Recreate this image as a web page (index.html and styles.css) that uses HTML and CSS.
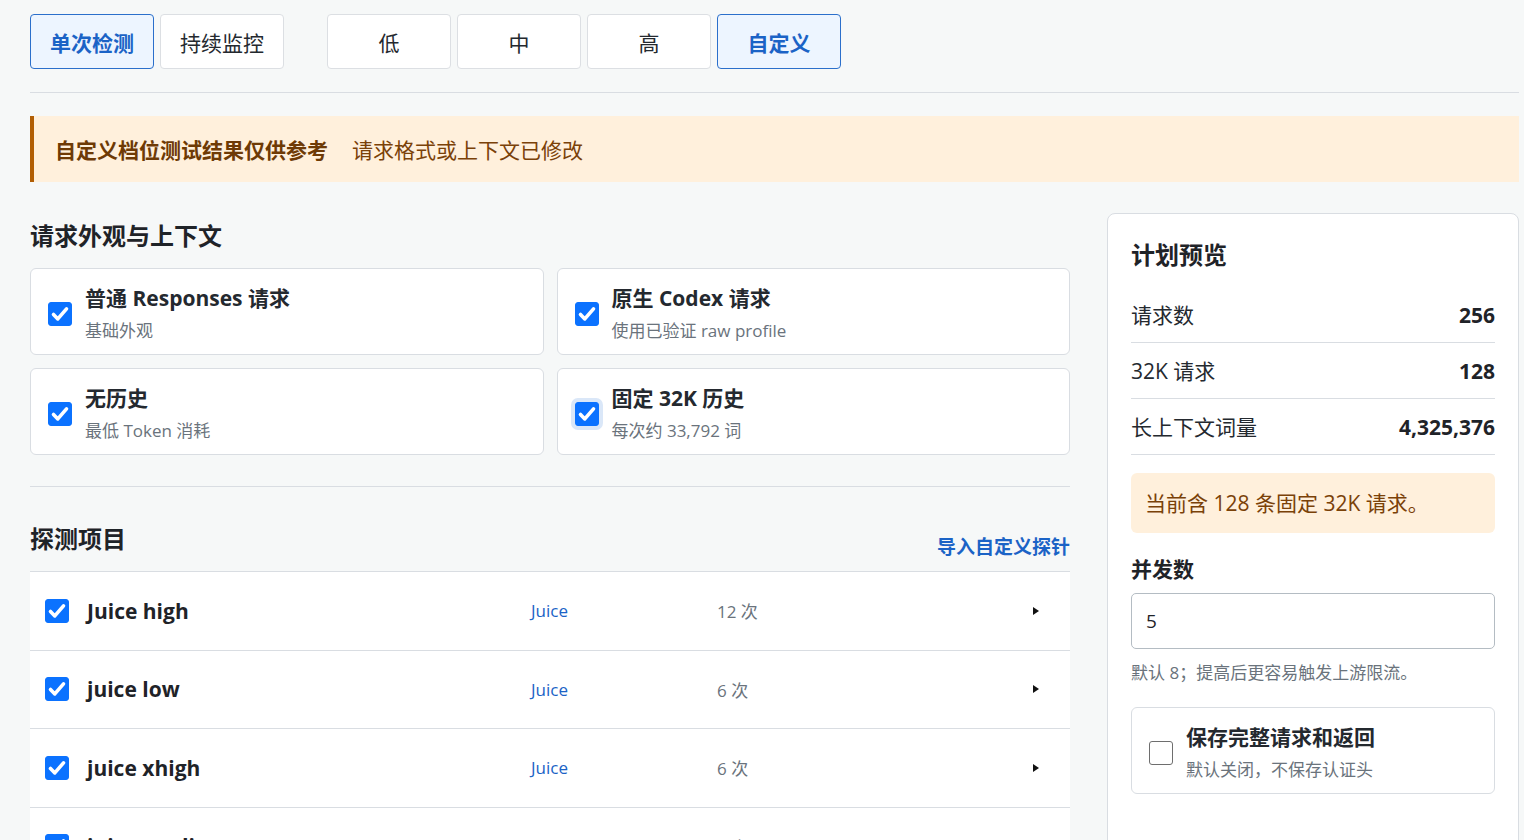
FILE: index.html
```html
<!DOCTYPE html>
<html lang="zh-CN">
<head>
    <meta charset="UTF-8">
    <meta name="viewport" content="width=device-width, initial-scale=1.0">
    <title>探测计划</title>
    <link rel="stylesheet" href="styles.css">
</head>
<body>
    <div class="page">
        <!-- 运行方式与档位 -->
        <div class="mode-bar">
            <div class="field">
                <div class="field-label">运行方式</div>
                <div class="seg">
                    <button class="seg-btn active">单次检测</button>
                    <button class="seg-btn">持续监控</button>
                </div>
            </div>
            <div class="field">
                <div class="field-label">档位</div>
                <div class="seg">
                    <button class="seg-btn">低</button>
                    <button class="seg-btn">中</button>
                    <button class="seg-btn">高</button>
                    <button class="seg-btn active">自定义</button>
                </div>
            </div>
        </div>

        <hr class="divider top-divider">

        <div class="banner">
            <strong>自定义档位测试结果仅供参考</strong>
            <span>请求格式或上下文已修改</span>
        </div>

        <div class="main">
            <div class="left">
                <h2 class="section-title first">请求外观与上下文</h2>
                <div class="option-grid">
                    <label class="option">
                        <span class="check on"><svg viewBox="0 0 24 24"><path d="M5.5 12.5l4.3 4.4 8.7-10"/></svg></span>
                        <span class="option-text">
                            <span class="option-title">普通 Responses 请求</span>
                            <span class="option-sub">基础外观</span>
                        </span>
                    </label>
                    <label class="option">
                        <span class="check on"><svg viewBox="0 0 24 24"><path d="M5.5 12.5l4.3 4.4 8.7-10"/></svg></span>
                        <span class="option-text">
                            <span class="option-title">原生 Codex 请求</span>
                            <span class="option-sub">使用已验证 raw profile</span>
                        </span>
                    </label>
                    <label class="option">
                        <span class="check on"><svg viewBox="0 0 24 24"><path d="M5.5 12.5l4.3 4.4 8.7-10"/></svg></span>
                        <span class="option-text">
                            <span class="option-title">无历史</span>
                            <span class="option-sub">最低 Token 消耗</span>
                        </span>
                    </label>
                    <label class="option">
                        <span class="check on focus"><svg viewBox="0 0 24 24"><path d="M5.5 12.5l4.3 4.4 8.7-10"/></svg></span>
                        <span class="option-text">
                            <span class="option-title">固定 32K 历史</span>
                            <span class="option-sub">每次约 33,792 词</span>
                        </span>
                    </label>
                </div>

                <hr class="divider mid-divider">

                <div class="probe-head">
                    <h2 class="section-title">探测项目</h2>
                    <a href="#" class="import-link">导入自定义探针</a>
                </div>

                <div class="probe-list">
                    <div class="probe-row">
                        <span class="check on"><svg viewBox="0 0 24 24"><path d="M5.5 12.5l4.3 4.4 8.7-10"/></svg></span>
                        <span class="probe-name">Juice high</span>
                        <span class="probe-cat">Juice</span>
                        <span class="probe-count">12 次</span>
                        <svg class="caret" viewBox="0 0 8 10"><polygon points="1,1 7,5 1,9"/></svg>
                    </div>
                    <div class="probe-row">
                        <span class="check on"><svg viewBox="0 0 24 24"><path d="M5.5 12.5l4.3 4.4 8.7-10"/></svg></span>
                        <span class="probe-name">juice low</span>
                        <span class="probe-cat">Juice</span>
                        <span class="probe-count">6 次</span>
                        <svg class="caret" viewBox="0 0 8 10"><polygon points="1,1 7,5 1,9"/></svg>
                    </div>
                    <div class="probe-row">
                        <span class="check on"><svg viewBox="0 0 24 24"><path d="M5.5 12.5l4.3 4.4 8.7-10"/></svg></span>
                        <span class="probe-name">juice xhigh</span>
                        <span class="probe-cat">Juice</span>
                        <span class="probe-count">6 次</span>
                        <svg class="caret" viewBox="0 0 8 10"><polygon points="1,1 7,5 1,9"/></svg>
                    </div>
                    <div class="probe-row">
                        <span class="check on"><svg viewBox="0 0 24 24"><path d="M5.5 12.5l4.3 4.4 8.7-10"/></svg></span>
                        <span class="probe-name">juice medium</span>
                        <span class="probe-cat">Juice</span>
                        <span class="probe-count">6 次</span>
                        <svg class="caret" viewBox="0 0 8 10"><polygon points="1,1 7,5 1,9"/></svg>
                    </div>
                </div>
            </div>

            <!-- 计划预览 -->
            <aside class="panel">
                <h2 class="section-title">计划预览</h2>
                <div class="stat">
                    <span>请求数</span>
                    <strong>256</strong>
                </div>
                <div class="stat">
                    <span>32K 请求</span>
                    <strong>128</strong>
                </div>
                <div class="stat">
                    <span>长上下文词量</span>
                    <strong>4,325,376</strong>
                </div>

                <div class="notice">当前含 128 条固定 32K 请求。</div>

                <div class="panel-label">并发数</div>
                <input class="num-input" type="text" value="5">
                <div class="help">默认 8；提高后更容易触发上游限流。</div>

                <label class="option panel-option">
                    <span class="check"></span>
                    <span class="option-text">
                        <span class="option-title">保存完整请求和返回</span>
                        <span class="option-sub">默认关闭，不保存认证头</span>
                    </span>
                </label>
            </aside>
        </div>
    </div>
</body>
</html>
```

FILE: styles.css
```css
body {
    margin: 0;
    background: #f6f8f8;
    color: #1f2328;
    font-family: "Open Sans", "Noto Sans CJK SC", sans-serif;
    overflow: hidden;
}
.page {
    padding: 0 5px 40px 30px;
    margin-top: -22px;
}

/* top selectors */
.mode-bar {
    display: flex;
    gap: 43px;
}
.field-label {
    font-size: 17px;
    font-weight: 700;
    line-height: 22px;
    margin-bottom: 14px;
    color: #3b434b;
}
.seg {
    display: flex;
    gap: 6px;
}
.seg-btn {
    width: 124px;
    height: 55px;
    background: #fff;
    border: 1px solid #dcdfe3;
    border-radius: 4px;
    font-family: inherit;
    font-size: 21px;
    color: #24292f;
    padding: 0;
}
.seg-btn.active {
    background: #edf5ff;
    border-color: #2b6fcb;
    color: #1b63c6;
    font-weight: 700;
}

.divider {
    border: none;
    border-top: 1px solid #d9dde2;
    margin: 0;
}
.top-divider {
    margin-top: 23px;
}

.banner {
    margin-top: 23px;
    height: 66px;
    display: flex;
    align-items: center;
    gap: 24px;
    padding-left: 21px;
    background: #fff0dc;
    border-left: 4px solid #b15e04;
    font-size: 21px;
    color: #7a4108;
}
.banner strong {
    color: #6e3a05;
}

/* main layout */
.main {
    margin-top: 31px;
    display: grid;
    grid-template-columns: 1040px 1fr;
    gap: 37px;
    align-items: start;
}
.section-title {
    margin: 0;
    font-size: 24px;
    line-height: 32px;
    font-weight: 700;
    color: #1f2328;
}
.section-title.first {
    margin-top: 7px;
}

.option-grid {
    margin-top: 16px;
    display: grid;
    grid-template-columns: 1fr 1fr;
    column-gap: 13px;
    row-gap: 13px;
}
.option {
    display: flex;
    align-items: center;
    gap: 13px;
    background: #fff;
    border: 1px solid #d9dde2;
    border-radius: 6px;
    padding: 14px 17px 10px;
}
.option-text {
    display: flex;
    flex-direction: column;
}
.option-title {
    font-size: 21px;
    line-height: 30px;
    font-weight: 700;
    color: #24292f;
}
.option-sub {
    margin-top: 5px;
    font-size: 17px;
    line-height: 26px;
    color: #6a737c;
}

.check {
    flex: none;
    width: 24px;
    height: 24px;
    box-sizing: border-box;
    border: 1.5px solid #6e6e6e;
    border-radius: 3px;
    background: #fff;
    display: flex;
    align-items: center;
    justify-content: center;
}
.check.on {
    background: #0b72ff;
    border-color: #0b72ff;
}
.check.focus {
    box-shadow: 0 0 0 4px #dae7f8;
}
.check svg {
    width: 24px;
    height: 24px;
    flex: none;
    fill: none;
    stroke: #fff;
    stroke-width: 3.6;
    stroke-linecap: round;
    stroke-linejoin: round;
}

.mid-divider {
    margin-top: 31px;
}
.probe-head {
    margin-top: 36px;
    display: flex;
    justify-content: space-between;
    align-items: flex-end;
}
.import-link {
    font-size: 19px;
    line-height: 22px;
    font-weight: 700;
    color: #1b63c6;
    text-decoration: none;
    margin-bottom: -3px;
}

.probe-list {
    margin-top: 16px;
    background: #fff;
    border-top: 1px solid #d9dde2;
}
.probe-row {
    height: 78.5px;
    box-sizing: border-box;
    border-bottom: 1px solid #d9dde2;
    display: grid;
    grid-template-columns: 24px 426px 168px 1fr 8px;
    column-gap: 18px;
    align-items: center;
    padding: 0 30px 0 15px;
}
.probe-name {
    font-size: 21px;
    font-weight: 700;
    color: #1f2328;
}
.probe-cat {
    font-size: 17px;
    color: #1b63c6;
}
.probe-count {
    font-size: 17px;
    color: #6a737c;
}
.caret {
    width: 8px;
    height: 10px;
    fill: #111;
}

/* right panel */
.panel {
    background: #fff;
    border: 1px solid #d9dde2;
    border-radius: 8px;
    padding: 25px 23px 80px 23px;
}
.stat {
    display: flex;
    justify-content: space-between;
    align-items: center;
    padding: 13px 0 12px;
    border-bottom: 1px solid #d9dde2;
    font-size: 21px;
    line-height: 30px;
    color: #24292f;
}
.stat:first-of-type {
    margin-top: 16px;
}
.stat strong {
    font-weight: 700;
    color: #1f2328;
}
.notice {
    margin-top: 18px;
    height: 60px;
    line-height: 60px;
    padding: 0 14px;
    background: #fff0dc;
    border-radius: 6px;
    font-size: 21px;
    color: #7a4108;
}
.panel-label {
    margin-top: 21px;
    font-size: 21px;
    line-height: 30px;
    font-weight: 700;
}
.num-input {
    display: block;
    margin-top: 9px;
    width: 100%;
    height: 56px;
    box-sizing: border-box;
    border: 1px solid #b4bcc3;
    border-radius: 5px;
    padding: 0 14px;
    font-family: inherit;
    font-size: 19px;
    color: #1f2328;
}
.help {
    margin-top: 11px;
    font-size: 17px;
    line-height: 26px;
    color: #6a737c;
}
.panel-option {
    margin-top: 21px;
}
```
